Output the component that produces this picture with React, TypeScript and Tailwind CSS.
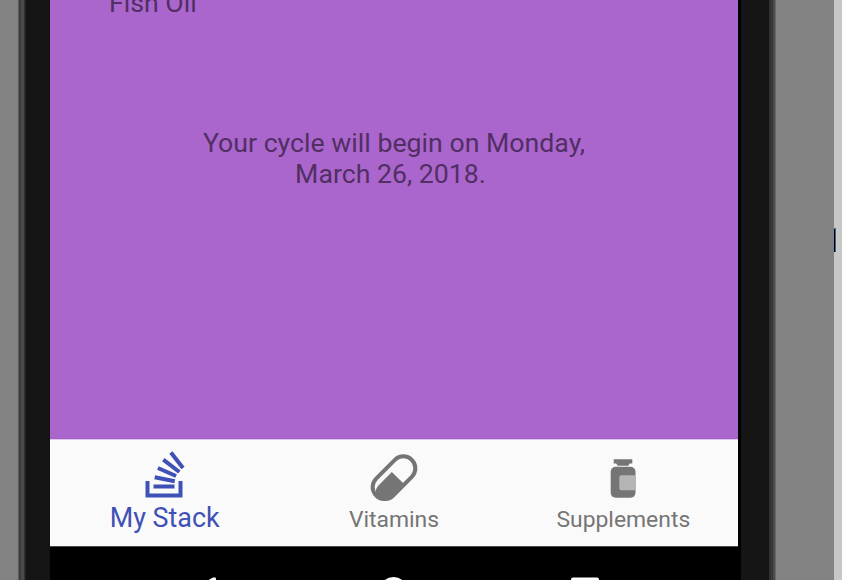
import React from "react";

function StackIcon() {
  return (
    <svg viewBox="0 0 48 50" className="h-[50px] w-12" fill="none" stroke="#3f51b5" strokeWidth="4">
      <path d="M6.5 30V44.4H39.5V30" />
      <path d="M12.5 35.5H33.5M13.7 26.2L33.8 30.2M16.9 17L35.1 25M22.3 8.6L38.3 21M29.9 1.4L42 17" />
    </svg>
  );
}

function PillIcon() {
  return (
    <svg viewBox="0 0 48 50" className="h-[50px] w-12" fill="none">
      <g transform="translate(24 26.7) rotate(-45)">
        <rect x="-25.2" y="-12" width="50.4" height="24" rx="12" stroke="#757575" strokeWidth="4" />
        <path d="M2.6 -5.6H-14C-19 -5.6 -22 -4.8 -24.5 -1C-24 7 -20 12 -13.3 12H2.6Z" fill="#757575" />
      </g>
    </svg>
  );
}

function BottleIcon() {
  return (
    <svg viewBox="0 0 48 50" className="h-[50px] w-12">
      <path d="M14.7 8.2H33.3V12.4H30.7L29.2 14.8H18.7L17.2 12.4H14.7Z" fill="#757575" />
      <rect x="11.7" y="15.8" width="24.8" height="31" rx="5" fill="#757575" />
      <path d="M36.5 24.2H22.3Q20.3 24.2 20.3 26.2V37.2Q20.3 39.2 22.3 39.2H36.5Z" fill="#b5b5b5" />
    </svg>
  );
}

function Tab({ icon, label, active = false }: { icon: React.ReactNode; label: string; active?: boolean }) {
  return (
    <div className="flex flex-1 flex-col items-center pt-[11px]">
      {icon}
      <span
        className={
          active
            ? "mt-px text-[26.9px] leading-[32px] text-[#3f51b5]"
            : "mt-[3px] text-[22.9px] leading-[32px] text-[#757575]"
        }
      >
        {label}
      </span>
    </div>
  );
}

function Edge({ mirrored = false }: { mirrored?: boolean }) {
  return (
    <div className={mirrored ? "flex w-[7px] shrink-0" : "flex w-2 shrink-0"}>
      <div className={mirrored ? "w-[2px] bg-[#303031]" : "w-px bg-[#5c5c5c]"} />
      <div className={mirrored ? "w-px bg-[#3b3b3e]" : "w-[2px] bg-[#3c3c3e]"} />
      <div className={mirrored ? "w-px bg-[#363637]" : "w-[3px] bg-[#4b4b4e]"} />
      <div className={mirrored ? "w-[2px] bg-[#4b4b4c]" : "w-px bg-[#333335]"} />
      <div className={mirrored ? "w-px bg-[#686868]" : "w-px bg-[#202021]"} />
    </div>
  );
}

export default function App() {
  return (
    <div className="flex h-[580px] w-[842px] overflow-hidden bg-[#828282] font-['Roboto',sans-serif]">
      <div className="w-[18px] shrink-0" />
      <Edge />
      <div className="w-6 shrink-0 bg-[#141414]" />
      <div className="flex w-[691px] shrink-0 flex-col bg-black">
        <main className="h-[439px] w-[688px] shrink-0 overflow-hidden border-b border-[#a562c6] bg-[#aa66cd] text-[26.7px] leading-[31px] text-[#512f63]">
          <p className="-mt-[12px] pl-[59px]">Fish Oil</p>
          <p className="mt-[109px] text-center">
            Your cycle will begin on Monday,
            <br />
            <span className="mr-[7px]">March 26, 2018.</span>
          </p>
        </main>
        <nav className="flex h-[107px] w-[688px] shrink-0 border-t border-[#e0c8ec] bg-[#fafafa]">
          <Tab active icon={<StackIcon />} label="My Stack" />
          <Tab icon={<PillIcon />} label="Vitamins" />
          <Tab icon={<BottleIcon />} label="Supplements" />
        </nav>
        <div className="h-[34px] w-[688px] shrink-0 overflow-hidden border-t border-[#484848]">
          <svg viewBox="0 0 688 33" className="block h-[33px] w-[688px]" fill="#fff">
            <path d="M157 34L162.5 30.8Q166 29.2 166 32V34Z" />
            <circle cx="343.5" cy="44" r="14" />
            <rect x="521" y="30.5" width="28" height="28" rx="2" />
          </svg>
        </div>
      </div>
      <div className="w-7 shrink-0 bg-[#151515]" />
      <Edge mirrored />
      <div className="w-[58px] shrink-0" />
      <div className="w-2 shrink-0 bg-[#c7c7c7] pt-[228px]">
        <div className="flex h-6 w-[2px] border-t border-[#557184]">
          <div className="w-px bg-black" />
          <div className="w-px bg-[#38678e]" />
        </div>
      </div>
    </div>
  );
}
